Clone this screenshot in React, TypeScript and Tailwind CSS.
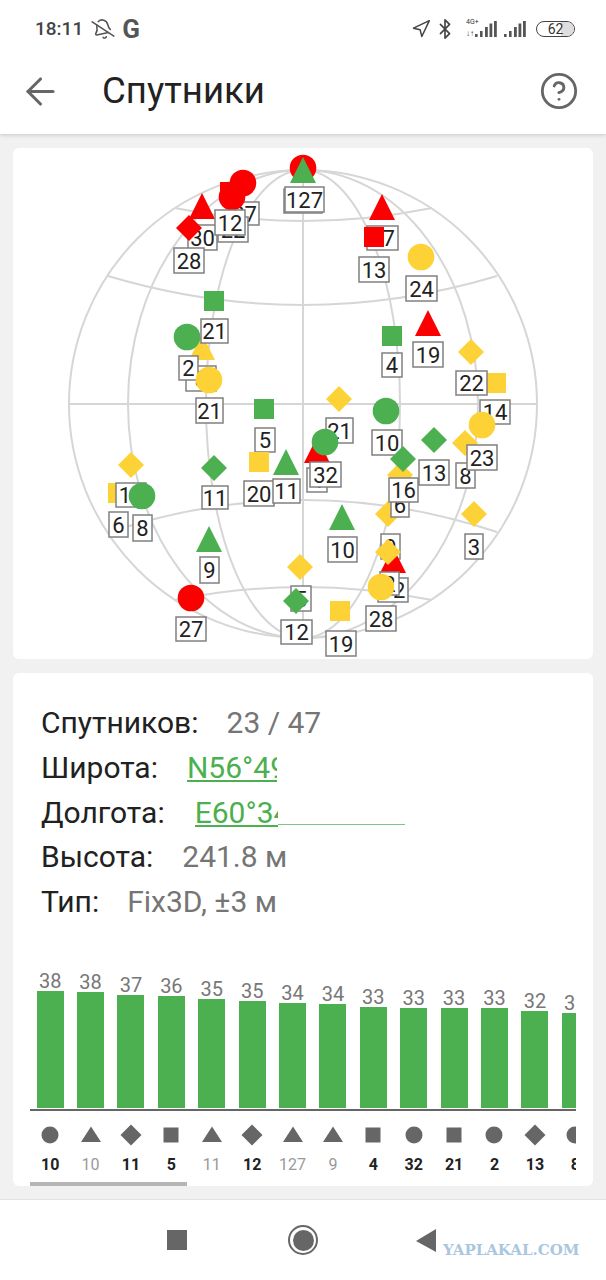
import React from "react";
import { ArrowLeft, BellOff, Bluetooth, CircleHelp, Navigation } from "lucide-react";

const RED = "#fb0000";
const GREEN = "#4caf50";
const YEL = "#fdd236";

type Shape = "c" | "s" | "t" | "d";
type Item =
  | { k: Shape; x: number; y: number; col: string }
  | { k: "l"; x0: number; y0: number; x1: number; y1: number; t: string };

const S = (k: Shape, x: number, y: number, col: string): Item => ({ k, x, y, col });
const L = (x0: number, y0: number, x1: number, y1: number, t: string): Item => ({ k: "l", x0, y0, x1, y1, t });

const items: Item[] = [
  S("s", 118, 493, YEL), L(116, 483, 146, 507, "14"), L(109, 512, 128, 537, "6"),
  S("d", 131, 465, YEL),
  S("c", 142, 496, GREEN), L(133, 515, 152, 541, "8"),
  S("t", 202, 347, YEL), L(186, 366, 216, 391, "3"),
  S("c", 187, 337, GREEN), L(179, 356, 198, 380, "2"),
  S("c", 209, 380, YEL), L(196, 398, 223, 423, "21"),
  S("s", 214, 301, GREEN), L(201, 319, 228, 343, "21"),
  L(230, 202, 259, 225, "27"), S("c", 243, 183, RED),
  L(218, 217, 248, 242, "22"), S("s", 230, 192, RED),
  S("t", 202, 206, RED), L(188, 225, 217, 250, "30"),
  S("c", 232, 197, RED), L(215, 210, 245, 235, "12"),
  S("d", 189, 228, RED), L(174, 248, 204, 273, "28"),
  S("c", 303, 168, RED), L(284, 189, 322, 213, "127"),
  S("t", 303, 170, GREEN), L(285, 187, 324, 212, "127"),
  L(367, 226, 398, 250, "17"), S("t", 382, 207, RED),
  S("s", 374, 237, RED), L(359, 257, 389, 282, "13"),
  S("c", 421, 257, YEL), L(406, 276, 437, 301, "24"),
  S("s", 392, 336, GREEN), L(382, 353, 402, 377, "4"),
  S("t", 428, 323, RED), L(413, 342, 443, 367, "19"),
  S("s", 496, 383, YEL), L(480, 400, 510, 424, "14"),
  S("d", 471, 352, YEL), L(456, 371, 487, 395, "22"),
  S("s", 264, 409, GREEN), L(255, 428, 275, 452, "5"),
  S("d", 339, 399, YEL), L(326, 418, 353, 443, "21"),
  S("c", 386, 411, GREEN), L(372, 430, 402, 455, "10"),
  S("d", 214, 468, GREEN), L(202, 486, 228, 509, "11"),
  S("s", 259, 462, YEL), L(244, 481, 274, 506, "20"),
  S("t", 286, 462, GREEN), L(273, 479, 300, 503, "11"),
  S("t", 317, 450, RED), L(307, 468, 327, 492, "4"),
  S("c", 325, 442, GREEN), L(310, 462, 341, 487, "32"),
  S("d", 434, 440, GREEN), L(419, 460, 449, 485, "13"),
  S("d", 465, 443, YEL), L(456, 463, 475, 488, "8"),
  S("c", 482, 425, YEL), L(467, 445, 497, 470, "23"),
  S("d", 388, 514, YEL), L(391, 493, 409, 517, "6"),
  S("d", 400, 475, YEL), S("d", 403, 459, GREEN), L(389, 478, 418, 502, "16"),
  S("t", 342, 517, GREEN), L(328, 537, 357, 562, "10"),
  S("d", 474, 514, YEL), L(465, 534, 483, 559, "3"),
  L(381, 534, 400, 559, "9"),
  S("t", 393, 560, RED), L(378, 578, 408, 602, "12"), L(380, 572, 399, 595, "2"),
  S("d", 388, 552, YEL),
  S("c", 381, 587, YEL), L(366, 606, 396, 631, "28"),
  S("s", 340, 611, YEL), L(326, 631, 356, 656, "19"),
  S("t", 209, 539, GREEN), L(200, 557, 219, 583, "9"),
  S("c", 191, 598, RED), L(176, 617, 206, 641, "27"),
  S("d", 300, 567, YEL), L(291, 586, 311, 611, "5"),
  S("d", 296, 601, GREEN), L(281, 620, 312, 644, "12"),
];

function Mark({ k, x, y, col }: { k: Shape; x: number; y: number; col: string }) {
  if (k === "c") return <circle cx={x} cy={y} r={13.3} fill={col} />;
  if (k === "s") return <rect x={x - 10} y={y - 10} width={20} height={20} fill={col} />;
  if (k === "t") return <polygon points={`${x},${y - 13} ${x + 13},${y + 13} ${x - 13},${y + 13}`} fill={col} />;
  return <polygon points={`${x},${y - 13} ${x + 13},${y} ${x},${y + 13} ${x - 13},${y}`} fill={col} />;
}

function Globe() {
  const line = { fill: "none", stroke: "#d6d6d6", strokeWidth: 2 };
  return (
    <svg width="580" height="511" viewBox="13 148 580 511" className="block font-[Roboto,sans-serif]">
      <circle cx={303} cy={404} r={234} {...line} />
      <ellipse cx={303} cy={404} rx={175} ry={234} {...line} />
      <ellipse cx={303} cy={404} rx={97} ry={234} {...line} />
      <line x1={303} y1={170} x2={303} y2={638} {...line} />
      <line x1={69} y1={404} x2={537} y2={404} {...line} />
      <path d="M175 208 Q303 234 432 208" {...line} />
      <path d="M108 276 Q303 334 497 276" {...line} />
      <path d="M110 532 Q303 468 497 532" {...line} />
      <path d="M175 600 Q303 574 432 600" {...line} />
      {items.map((it, i) =>
        it.k === "l" ? (
          <g key={i}>
            <rect x={it.x0} y={it.y0} width={it.x1 - it.x0} height={it.y1 - it.y0} fill="#fff" stroke="#808080" strokeWidth={1.5} />
            <text x={(it.x0 + it.x1) / 2} y={(it.y0 + it.y1) / 2 + 8} textAnchor="middle" fontSize={22} fill="#222">
              {it.t}
            </text>
          </g>
        ) : (
          <Mark key={i} k={it.k} x={it.x} y={it.y} col={it.col} />
        )
      )}
    </svg>
  );
}

const bars: { v: number; h: number; s: Shape; n: string; b: boolean }[] = [
  { v: 38, h: 117, s: "c", n: "10", b: true },
  { v: 38, h: 116, s: "t", n: "10", b: false },
  { v: 37, h: 113, s: "d", n: "11", b: true },
  { v: 36, h: 112, s: "s", n: "5", b: true },
  { v: 35, h: 109, s: "t", n: "11", b: false },
  { v: 35, h: 107, s: "d", n: "12", b: true },
  { v: 34, h: 105, s: "t", n: "127", b: false },
  { v: 34, h: 104, s: "t", n: "9", b: false },
  { v: 33, h: 101, s: "s", n: "4", b: true },
  { v: 33, h: 100, s: "c", n: "32", b: true },
  { v: 33, h: 100, s: "s", n: "21", b: true },
  { v: 33, h: 100, s: "c", n: "2", b: true },
  { v: 32, h: 97, s: "d", n: "13", b: true },
  { v: 32, h: 95, s: "c", n: "8", b: true },
];

function SmallIcon({ s }: { s: Shape }) {
  return (
    <svg width="24" height="24" viewBox="0 0 24 24" className="block">
      {s === "c" && <circle cx="12" cy="12" r="8.5" fill="#666" />}
      {s === "s" && <rect x="4.5" y="4.5" width="15" height="15" fill="#666" />}
      {s === "t" && <polygon points="12,3.5 22,19 2,19" fill="#666" />}
      {s === "d" && <polygon points="12,1.5 22.5,12 12,22.5 1.5,12" fill="#666" />}
    </svg>
  );
}

function Signal() {
  return (
    <svg width="24" height="18" viewBox="0 0 24 18" className="block">
      <rect x="1" y="14" width="2.6" height="3" fill="#555" />
      <rect x="6" y="11" width="2.6" height="6" fill="#555" />
      <rect x="11" y="7" width="2.8" height="10" fill="#555" />
      <rect x="15.5" y="3.5" width="2.8" height="13.5" fill="#555" />
      <rect x="20" y="1" width="2.8" height="16" fill="#555" />
    </svg>
  );
}

function Row({ label, children }: { label: string; children: React.ReactNode }) {
  return (
    <div className="flex h-[44.8px] items-center whitespace-nowrap text-[30px] text-[#212121]">
      <span>{label}</span>
      {children}
    </div>
  );
}

export default function App() {
  return (
    <div className="flex h-[1280px] w-[606px] flex-col overflow-hidden bg-[#f1f1f1] font-[Roboto,sans-serif]">
      <div className="relative z-10 bg-white shadow-[0_1px_4px_rgba(0,0,0,0.18)]">
        <div className="flex h-[58px] items-center pl-[35px] pr-[31px] text-[#555]">
          <span className="text-[19px] font-medium text-[#444]">18:11</span>
          <BellOff size={22} strokeWidth={1.7} className="ml-[9px] -rotate-12" />
          <span className="ml-[8px] text-[26px] font-bold leading-none">G</span>
          <div className="ml-auto flex items-center">
            <Navigation size={20} strokeWidth={1.8} color="#444" />
            <Bluetooth size={22} strokeWidth={1.8} className="ml-[2.5px]" color="#444" />
            <div className="relative ml-[10.5px] h-[18px] w-[32px] text-[#333]">
              <span className="absolute -top-[1px] left-0 text-[7px] leading-none">4G+</span>
              <span className="absolute bottom-0 left-0 text-[8px] leading-none">↓↑</span>
              <div className="absolute left-[8px] top-0">
                <Signal />
              </div>
            </div>
            <div className="ml-[5px]">
              <Signal />
            </div>
            <div className="relative ml-[9px] flex h-[16px] w-[39px] items-center justify-center overflow-hidden rounded-full border border-[#444] text-[14px] leading-none text-[#333]">
              <div className="absolute bottom-0 right-0 top-0 w-[13px] bg-[#ddd]" />
              <span className="relative">62</span>
            </div>
          </div>
        </div>
        <div className="flex h-[76px] items-center pb-[10px] pl-[19px] pr-[27px]">
          <ArrowLeft size={43} strokeWidth={1.7} color="#666" />
          <h1 className="ml-[40px] text-[36.6px] font-normal leading-none text-[#222]">Спутники</h1>
          <CircleHelp size={40} strokeWidth={1.7} color="#666" className="ml-auto" />
        </div>
      </div>

      <div className="mx-[13px] mt-[14px] h-[511px] overflow-hidden rounded-md bg-white">
        <Globe />
      </div>

      <div className="relative mx-[13px] mt-[14px] h-[513px] rounded-md bg-white">
        <div className="pl-[28px] pt-[27px]">
          <Row label="Спутников:">
            <span className="ml-[28px] text-[#757575]">23 / 47</span>
          </Row>
          <Row label="Широта:">
            <span className="ml-[29px] w-[90px] overflow-hidden text-[#4caf50] underline decoration-[1.5px] underline-offset-[2px]">N56°49'12"</span>
          </Row>
          <Row label="Долгота:">
            <span className="ml-[30px] w-[83px] overflow-hidden text-[#4caf50] underline decoration-[1.5px] underline-offset-[2px]">E60°34'18"</span>
            <span className="mt-[26px] h-px w-[127px] bg-[#7fc583]" />
          </Row>
          <Row label="Высота:">
            <span className="ml-[29px] text-[#757575]">241.8 м</span>
          </Row>
          <Row label="Тип:">
            <span className="ml-[28px] text-[#757575]">Fix3D, ±3 м</span>
          </Row>
        </div>

        <div className="absolute bottom-0 left-[17px] w-[546px]">
          <div className="flex h-[144px] w-[546px] items-end overflow-hidden border-b-2 border-[#666]">
            {bars.map((b, i) => (
              <div key={i} className="flex w-[40.4px] shrink-0 flex-col items-center">
                <span className="text-[20px] leading-[20px] text-[#777]">{b.v}</span>
                <div className="mb-px w-[27px] bg-[#4caf50]" style={{ height: b.h }} />
              </div>
            ))}
          </div>
          <div className="flex w-[546px] overflow-hidden pt-[12px]">
            {bars.map((b, i) => (
              <div key={i} className="flex w-[40.4px] shrink-0 flex-col items-center">
                <SmallIcon s={b.s} />
                <span className={b.b ? "mt-[8px] text-[16px] font-bold leading-[20px] text-[#222]" : "mt-[8px] text-[16px] leading-[20px] text-[#999]"}>
                  {b.n}
                </span>
              </div>
            ))}
          </div>
          <div className="mt-[7px] h-[4px] w-[157px] bg-[#b5b5b5]" />
        </div>
      </div>

      <div className="relative mt-[13px] flex flex-1 items-center justify-center border-t border-[#e2e2e2] bg-white">
        <div className="absolute left-[167px] top-[30px] h-[20px] w-[20px] bg-[#666]" />
        <div className="absolute left-[288px] top-[25px] flex h-[30px] w-[30px] items-center justify-center rounded-full border-2 border-[#666]">
          <div className="h-[21px] w-[21px] rounded-full bg-[#666]" />
        </div>
        <svg width="20" height="23" viewBox="0 0 20 23" className="absolute left-[416px] top-[29px]">
          <polygon points="0,12 20,0 20,23" fill="#666" />
        </svg>
        <span className="absolute left-[443px] top-[40px] font-['DejaVu_Serif',serif] text-[15px] font-bold leading-[20px] text-[#a9c7df]">
          YAPLAKAL.COM
        </span>
      </div>
    </div>
  );
}
